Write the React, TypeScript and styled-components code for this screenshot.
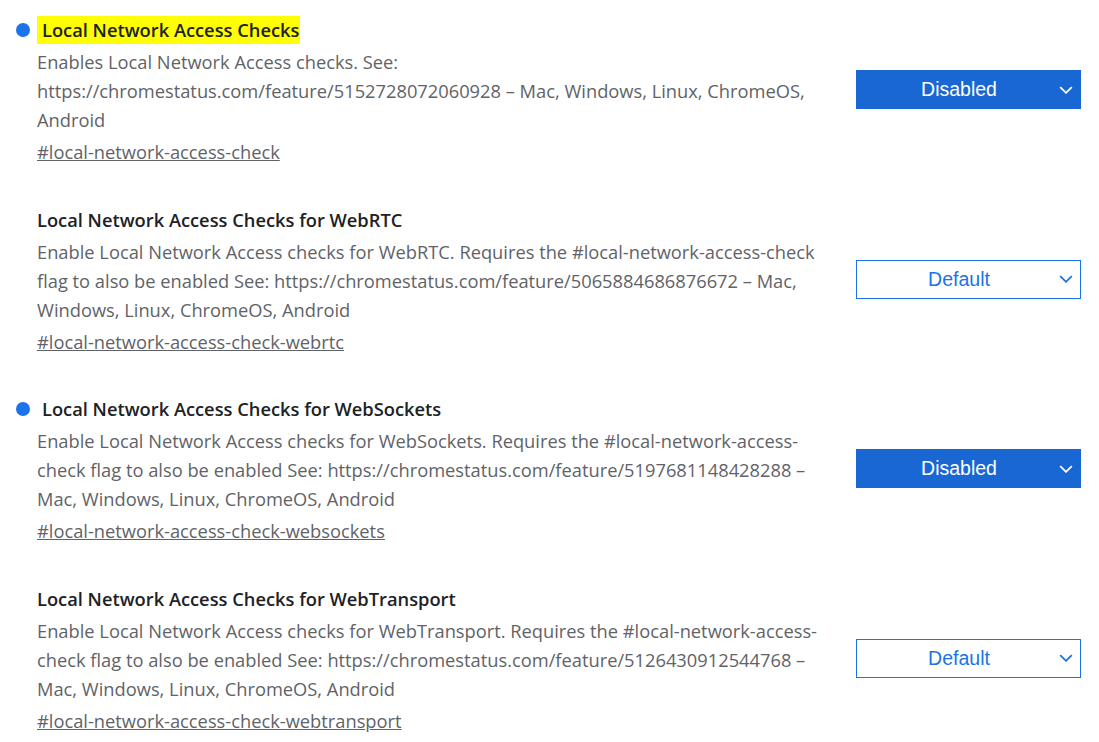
import React from "react";
import styled, { createGlobalStyle } from "styled-components";

const Global = createGlobalStyle`
  html, body { margin: 0; padding: 0; background: #ffffff; }
  body { font-family: "Open Sans", "Noto Sans", sans-serif; -webkit-font-smoothing: antialiased; }
`;

type Flag = {
  name: string;
  description: string;
  anchor: string;
  value: "Default" | "Disabled" | "Enabled";
  highlighted?: boolean;
};

const flags: Flag[] = [
  {
    name: "Local Network Access Checks",
    description:
      "Enables Local Network Access checks. See: https://chromestatus.com/feature/5152728072060928 – Mac, Windows, Linux, ChromeOS, Android",
    anchor: "#local-network-access-check",
    value: "Disabled",
    highlighted: true,
  },
  {
    name: "Local Network Access Checks for WebRTC",
    description:
      "Enable Local Network Access checks for WebRTC. Requires the #local-network-access-check flag to also be enabled See: https://chromestatus.com/feature/5065884686876672 – Mac, Windows, Linux, ChromeOS, Android",
    anchor: "#local-network-access-check-webrtc",
    value: "Default",
  },
  {
    name: "Local Network Access Checks for WebSockets",
    description:
      "Enable Local Network Access checks for WebSockets. Requires the #local-network-access-check flag to also be enabled See: https://chromestatus.com/feature/5197681148428288 – Mac, Windows, Linux, ChromeOS, Android",
    anchor: "#local-network-access-check-websockets",
    value: "Disabled",
  },
  {
    name: "Local Network Access Checks for WebTransport",
    description:
      "Enable Local Network Access checks for WebTransport. Requires the #local-network-access-check flag to also be enabled See: https://chromestatus.com/feature/5126430912544768 – Mac, Windows, Linux, ChromeOS, Android",
    anchor: "#local-network-access-check-webtransport",
    value: "Default",
  },
];

const List = styled.div`
  display: flex;
  flex-direction: column;
  gap: 39.6px;
  padding: 16px 18px 0 37px;
`;

const Row = styled.div`
  display: flex;
  align-items: center;
  justify-content: space-between;
  gap: 16px;
`;

const Text = styled.div`
  width: 800px;
  display: flex;
  flex-direction: column;
`;

const Name = styled.h2<{ $changed: boolean; $highlight: boolean }>`
  position: relative;
  align-self: flex-start;
  margin: 0;
  padding-left: ${(p) => (p.$changed ? "5px" : "0")};
  font-size: 18.3px;
  font-weight: 600;
  line-height: 28px;
  color: #202124;
  background: ${(p) => (p.$highlight ? "#ffff00" : "transparent")};
  ${(p) => (p.$highlight ? "padding-right: 1px;" : "")}
`;

const Dot = styled.span`
  position: absolute;
  left: -21px;
  top: 7px;
  width: 14px;
  height: 14px;
  border-radius: 50%;
  background: #1a73e8;
`;

const Description = styled.p`
  margin: 3px 0 0;
  font-size: 18.3px;
  line-height: 29px;
  color: #5f6368;
`;

const Anchor = styled.a`
  margin-top: 3px;
  align-self: flex-start;
  font-size: 18.3px;
  line-height: 29px;
  color: #5f6368;
  text-decoration: underline;
`;

const Select = styled.div<{ $active: boolean }>`
  position: relative;
  flex: none;
  box-sizing: border-box;
  width: 225px;
  height: 39px;
  margin-bottom: 3px;
  display: flex;
  align-items: center;
  justify-content: center;
  padding-right: 19px;
  font-family: "Liberation Sans", Arial, sans-serif;
  font-size: 19.5px;
  color: ${(p) => (p.$active ? "#ffffff" : "#1a73e8")};
  background: ${(p) => (p.$active ? "#1967d2" : "#ffffff")};
  border: 1px solid ${(p) => (p.$active ? "#1967d2" : "#1a73e8")};
`;

const Chevron = styled.svg`
  position: absolute;
  right: 7px;
  top: 50%;
  margin-top: -4px;
`;

function FlagRow({ flag }: { flag: Flag }) {
  const changed = flag.value !== "Default";
  return (
    <Row>
      <Text>
        <Name $changed={changed} $highlight={!!flag.highlighted}>
          {changed && <Dot />}
          {flag.name}
        </Name>
        <Description>{flag.description}</Description>
        <Anchor href={flag.anchor}>{flag.anchor}</Anchor>
      </Text>
      <Select $active={changed}>
        {flag.value}
        <Chevron width="14" height="8" viewBox="0 0 14 8">
          <path d="M1.2 1.2l5.8 5.6 5.8-5.6" fill="none" stroke="currentColor" strokeWidth="1.8" />
        </Chevron>
      </Select>
    </Row>
  );
}

export default function App() {
  return (
    <>
      <Global />
      <List>
        {flags.map((f) => (
          <FlagRow key={f.anchor} flag={f} />
        ))}
      </List>
    </>
  );
}
